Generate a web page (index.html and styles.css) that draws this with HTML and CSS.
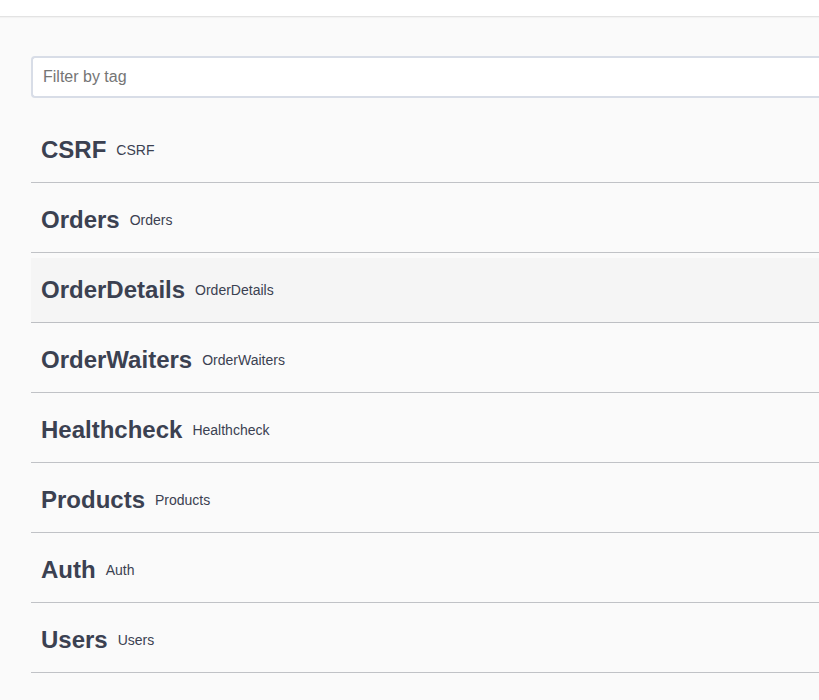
FILE: index.html
```html
<!DOCTYPE html>
<html>
<head>
<meta charset="utf-8">
<link rel="stylesheet" href="styles.css">
</head>
<body>
<div class="topbar"></div>
<main class="wrapper">
  <div class="filter-container">
    <input class="filter-input" type="text" placeholder="Filter by tag">
  </div>
  <section class="tags">
    <h3 class="tag"><span class="tag-name">CSRF</span><small class="tag-desc">CSRF</small></h3>
    <h3 class="tag"><span class="tag-name">Orders</span><small class="tag-desc">Orders</small></h3>
    <h3 class="tag is-hover"><span class="tag-name">OrderDetails</span><small class="tag-desc">OrderDetails</small></h3>
    <h3 class="tag"><span class="tag-name">OrderWaiters</span><small class="tag-desc">OrderWaiters</small></h3>
    <h3 class="tag"><span class="tag-name">Healthcheck</span><small class="tag-desc">Healthcheck</small></h3>
    <h3 class="tag"><span class="tag-name">Products</span><small class="tag-desc">Products</small></h3>
    <h3 class="tag"><span class="tag-name">Auth</span><small class="tag-desc">Auth</small></h3>
    <h3 class="tag"><span class="tag-name">Users</span><small class="tag-desc">Users</small></h3>
  </section>
</main>
</body>
</html>
```
FILE: styles.css
```css
html, body {
  margin: 0;
  padding: 0;
  background: #fafafa;
  overflow: hidden;
  font-family: "Liberation Sans", Arial, sans-serif;
  color: #3b4151;
}
.topbar {
  height: 16px;
  background: #fff;
  border-bottom: 1px solid #e3e3e3;
  box-shadow: 0 1px 1px rgba(0,0,0,0.03);
}
.wrapper {
  box-sizing: border-box;
  width: 100%;
  padding: 19px 0 40px 31px;
}
.filter-container {
  margin: 20px 0;
}
.filter-input {
  display: block;
  box-sizing: border-box;
  width: 100%;
  height: 42px;
  margin: 0;
  padding: 10px;
  border: 2px solid #d8dde7;
  border-right: none;
  border-radius: 4px 0 0 4px;
  background: #fff;
  font-family: "Liberation Sans", Arial, sans-serif;
  font-size: 16px;
  color: #3b4151;
  outline: none;
}
.filter-input::placeholder {
  color: #757575;
}
.tags {
  display: flex;
  flex-direction: column;
}
.tag {
  display: flex;
  align-items: center;
  box-sizing: border-box;
  height: 65px;
  margin: 0 0 5px;
  padding: 10px 20px 10px 10px;
  border-bottom: 1px solid rgba(59,65,81,0.3);
  font-size: 24px;
  font-weight: 700;
  line-height: 1.2;
}
.tag.is-hover {
  background: rgba(0,0,0,0.02);
}
.tag-desc {
  padding: 0 10px;
  font-size: 14px;
  font-weight: 400;
}
```
